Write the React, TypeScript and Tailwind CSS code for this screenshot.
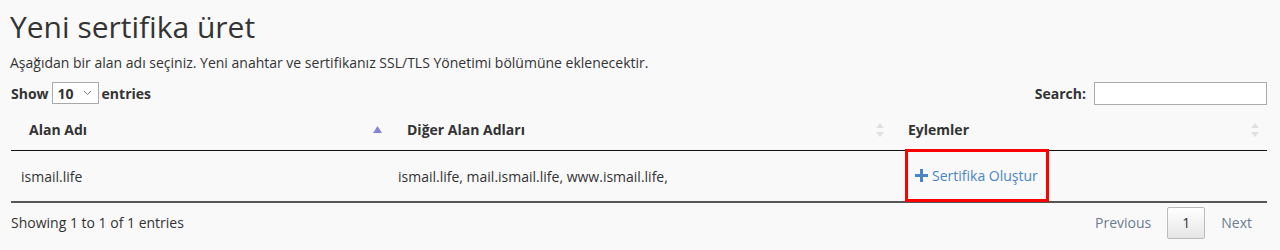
function SortBoth() {
  return (
    <svg width="8" height="14" viewBox="0 0 8 14" className="shrink-0">
      <path d="M4 0 L8 5 L0 5 Z" fill="#e0e0e0" />
      <path d="M4 14 L8 9 L0 9 Z" fill="#e0e0e0" />
    </svg>
  );
}

function SortAsc() {
  return (
    <svg width="9" height="8" viewBox="0 0 9 8" className="shrink-0">
      <path d="M4.5 0 L9 7 L0 7 Z" fill="#8484dc" />
    </svg>
  );
}

export default function App() {
  return (
    <div
      className="h-[250px] w-[1280px] overflow-hidden bg-[#f9f9f9] px-[11px] text-[14px] text-[#333]"
      style={{ fontFamily: '"Open Sans", "Noto Sans", sans-serif' }}
    >
      <h1 className="-ml-[1px] pt-[8px] text-[30px] leading-[38px] font-normal text-[#333]">Yeni sertifika üret</h1>
      <p className="-ml-[1px] mt-[7px] leading-[20px]">
        Aşağıdan bir alan adı seçiniz. Yeni anahtar ve sertifikanız SSL/TLS Yönetimi bölümüne eklenecektir.
      </p>
      <div className="mt-[9px] flex h-[22px] items-center justify-between">
        <div className="flex items-center gap-[3px] font-bold">
          <span>Show</span>
          <div className="flex h-[22px] w-[47px] items-center justify-between border border-[#aaa] bg-white pr-[6px] pl-[5px]">
            <span>10</span>
            <svg width="9" height="6" viewBox="0 0 9 6">
              <path d="M1 1 L4.5 4.5 L8 1" fill="none" stroke="#777" strokeWidth="1" />
            </svg>
          </div>
          <span>entries</span>
        </div>
        <div className="mr-[2px] flex items-center gap-[8px] font-bold">
          <span>Search:</span>
          <div className="h-[23px] w-[173px] border border-[#aaa] bg-white"></div>
        </div>
      </div>
      <div className="mt-[5px] w-[1256px]">
        <div className="grid h-[42px] grid-cols-[377px_502px_377px] border-b border-[#111] font-bold">
          <div className="flex items-center justify-between pr-[6px] pl-[18px]">
            <span>Alan Adı</span>
            <SortAsc />
          </div>
          <div className="flex items-center justify-between pr-[6px] pl-[19px]">
            <span>Diğer Alan Adları</span>
            <SortBoth />
          </div>
          <div className="flex items-center justify-between pr-[8px] pl-[18px]">
            <span>Eylemler</span>
            <SortBoth />
          </div>
        </div>
        <div className="grid h-[52px] grid-cols-[377px_502px_377px] border-b-2 border-[#555]">
          <div className="flex items-center pl-[10px]">ismail.life</div>
          <div className="flex items-center pl-[10px]">ismail.life, mail.ismail.life, www.ismail.life,</div>
          <div className="flex items-stretch pl-[15px]">
            <div className="-mt-[2px] -mb-[1px] flex w-[144px] items-center border-[3px] border-[#f00] pl-[7px] text-[#4a85c6]">
              <svg width="13" height="13" viewBox="0 0 13 13" className="mr-[4px]">
                <path d="M5 0 H8 V5 H13 V8 H8 V13 H5 V8 H0 V5 H5 Z" fill="#4a85c6" />
              </svg>
              <span>Sertifika Oluştur</span>
            </div>
          </div>
        </div>
      </div>
      <div className="flex w-[1256px] items-start justify-between">
        <span className="pt-[9px]">Showing 1 to 1 of 1 entries</span>
        <div className="mt-[3px] flex items-center">
          <span className="px-[16px] py-[6px] text-[#6b7d91]">Previous</span>
          <span className="flex h-[32px] w-[38px] items-center justify-center rounded-[2px] border border-[#bbb] bg-gradient-to-b from-white to-[#e6e6e6] text-[#333]">
            1
          </span>
          <span className="px-[16px] py-[6px] pr-[15px] text-[#6b7d91]">Next</span>
        </div>
      </div>
    </div>
  );
}
